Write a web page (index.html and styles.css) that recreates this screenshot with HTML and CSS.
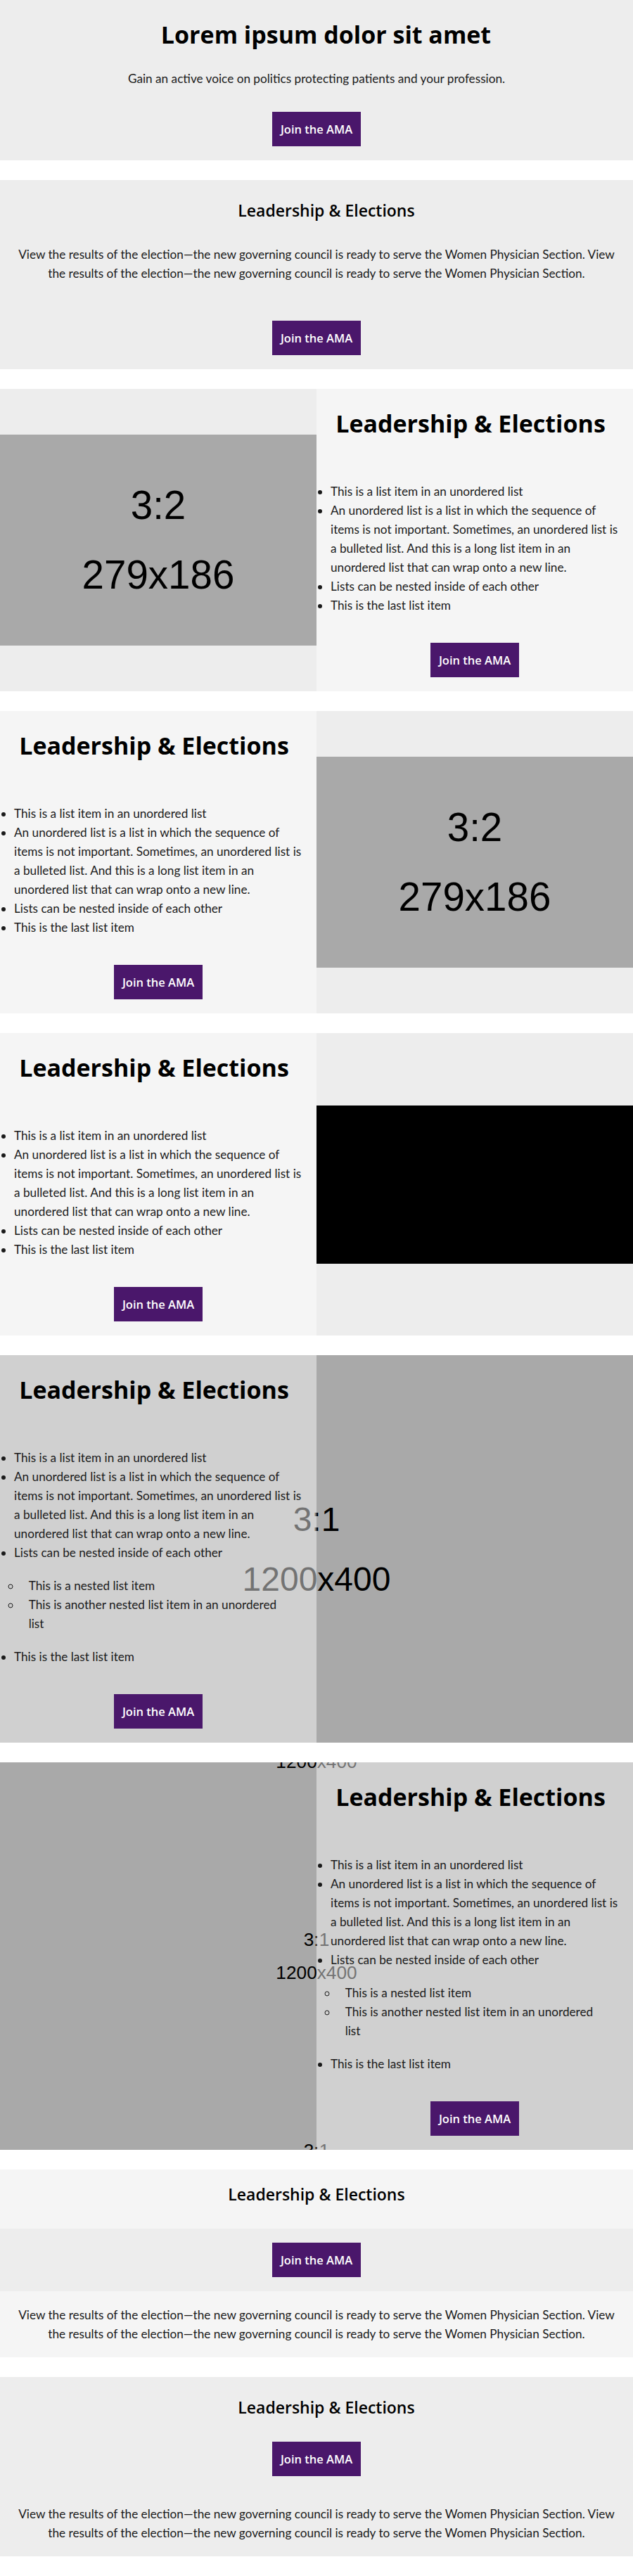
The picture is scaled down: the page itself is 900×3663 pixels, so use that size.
FILE: index.html
```html
<!DOCTYPE html>
<html lang="en">
<head>
<meta charset="utf-8">
<title>Leadership &amp; Elections</title>
<link rel="stylesheet" href="styles.css">
</head>
<body>
<main class="page">

  <section class="hero">
    <h1 class="hero__title">Lorem ipsum dolor sit amet</h1>
    <p class="hero__text">Gain an active voice on politics protecting patients and your profession.</p>
    <div class="actions"><a class="btn" href="#">Join the AMA</a></div>
  </section>

  <section class="block block--text-first">
    <h2 class="block__title">Leadership &amp; Elections</h2>
    <p class="block__text">View the results of the election—the new governing council is ready to serve the Women Physician Section. View the results of the election—the new governing council is ready to serve the Women Physician Section.</p>
    <div class="actions"><a class="btn" href="#">Join the AMA</a></div>
  </section>

  <section class="split">
    <div class="split__media">
      <div class="ph ph--photo"><span>3:2</span><span>279x186</span></div>
    </div>
    <div class="split__body">
      <h2 class="split__title">Leadership &amp; Elections</h2>
      <ul class="list">
        <li>This is a list item in an unordered list</li>
        <li>An unordered list is a list in which the sequence of items is not important. Sometimes, an unordered list is a bulleted list. And this is a long list item in an unordered list that can wrap onto a new line.</li>
        <li>Lists can be nested inside of each other</li>
        <li>This is the last list item</li>
      </ul>
      <div class="actions"><a class="btn" href="#">Join the AMA</a></div>
    </div>
  </section>

  <section class="split">
    <div class="split__body">
      <h2 class="split__title">Leadership &amp; Elections</h2>
      <ul class="list">
        <li>This is a list item in an unordered list</li>
        <li>An unordered list is a list in which the sequence of items is not important. Sometimes, an unordered list is a bulleted list. And this is a long list item in an unordered list that can wrap onto a new line.</li>
        <li>Lists can be nested inside of each other</li>
        <li>This is the last list item</li>
      </ul>
      <div class="actions"><a class="btn" href="#">Join the AMA</a></div>
    </div>
    <div class="split__media">
      <div class="ph ph--photo"><span>3:2</span><span>279x186</span></div>
    </div>
  </section>

  <section class="split">
    <div class="split__body">
      <h2 class="split__title">Leadership &amp; Elections</h2>
      <ul class="list">
        <li>This is a list item in an unordered list</li>
        <li>An unordered list is a list in which the sequence of items is not important. Sometimes, an unordered list is a bulleted list. And this is a long list item in an unordered list that can wrap onto a new line.</li>
        <li>Lists can be nested inside of each other</li>
        <li>This is the last list item</li>
      </ul>
      <div class="actions"><a class="btn" href="#">Join the AMA</a></div>
    </div>
    <div class="split__media">
      <div class="video"></div>
    </div>
  </section>

  <section class="split split--overlay">
    <div class="split__bg split__bg--cover" aria-hidden="true">
      <div class="ph-text ph-text--cover"><span>3:1</span><span>1200x400</span></div>
    </div>
    <div class="split__body split__body--veil">
      <h2 class="split__title">Leadership &amp; Elections</h2>
      <ul class="list">
        <li>This is a list item in an unordered list</li>
        <li>An unordered list is a list in which the sequence of items is not important. Sometimes, an unordered list is a bulleted list. And this is a long list item in an unordered list that can wrap onto a new line.</li>
        <li>Lists can be nested inside of each other
          <ul>
            <li>This is a nested list item</li>
            <li>This is another nested list item in an unordered list</li>
          </ul>
        </li>
        <li>This is the last list item</li>
      </ul>
      <div class="actions"><a class="btn" href="#">Join the AMA</a></div>
    </div>
    <div class="split__media split__media--clear"></div>
  </section>

  <section class="split split--overlay">
    <div class="split__bg split__bg--tiles" aria-hidden="true">
      <div class="ph-tile"><span>3:1</span><span>1200x400</span></div>
      <div class="ph-tile"><span>3:1</span><span>1200x400</span></div>
      <div class="ph-tile"><span>3:1</span><span>1200x400</span></div>
    </div>
    <div class="split__media split__media--clear"></div>
    <div class="split__body split__body--veil">
      <h2 class="split__title">Leadership &amp; Elections</h2>
      <ul class="list">
        <li>This is a list item in an unordered list</li>
        <li>An unordered list is a list in which the sequence of items is not important. Sometimes, an unordered list is a bulleted list. And this is a long list item in an unordered list that can wrap onto a new line.</li>
        <li>Lists can be nested inside of each other
          <ul>
            <li>This is a nested list item</li>
            <li>This is another nested list item in an unordered list</li>
          </ul>
        </li>
        <li>This is the last list item</li>
      </ul>
      <div class="actions"><a class="btn" href="#">Join the AMA</a></div>
    </div>
  </section>

  <section class="stack">
    <div class="stack__band stack__band--head">
      <h2 class="stack__title">Leadership &amp; Elections</h2>
    </div>
    <div class="stack__band stack__band--cta">
      <div class="actions"><a class="btn" href="#">Join the AMA</a></div>
    </div>
    <div class="stack__band stack__band--copy">
      <p class="block__text">View the results of the election—the new governing council is ready to serve the Women Physician Section. View the results of the election—the new governing council is ready to serve the Women Physician Section.</p>
    </div>
  </section>

  <section class="block block--cta-first">
    <h2 class="block__title">Leadership &amp; Elections</h2>
    <div class="actions"><a class="btn" href="#">Join the AMA</a></div>
    <p class="block__text">View the results of the election—the new governing council is ready to serve the Women Physician Section. View the results of the election—the new governing council is ready to serve the Women Physician Section.</p>
  </section>

</main>
</body>
</html>
```

FILE: styles.css
```css
* {
  box-sizing: border-box;
}

html,
body {
  margin: 0;
  padding: 0;
  background: #ffffff;
}

body {
  font-family: Lato, "Open Sans", "Liberation Sans", sans-serif;
  font-size: 17.2px;
  line-height: 27px;
  color: #1a1a1a;
}

.page {
  display: flex;
  flex-direction: column;
  gap: 28px;
  padding-bottom: 28px;
}

/* ---------- shared ---------- */

.actions {
  display: flex;
  justify-content: center;
}

.btn {
  display: block;
  height: 49px;
  padding: 0 12px;
  background: #4a176b;
  color: #ffffff;
  font-family: "Open Sans", Lato, sans-serif;
  font-weight: 600;
  font-size: 16.5px;
  line-height: 49px;
  text-decoration: none;
  white-space: nowrap;
}

/* ---------- hero ---------- */

.hero {
  background: #ededed;
  text-align: center;
  padding: 29px 24px 20px;
}

.hero__title {
  margin: 0;
  padding-left: 27px;
  font-family: "Open Sans", Lato, sans-serif;
  font-weight: 700;
  font-size: 34px;
  line-height: 40px;
  color: #000000;
}

.hero__text {
  margin: 29px 0 34px;
}

/* ---------- centered blocks ---------- */

.block {
  background: #ededed;
  text-align: center;
  padding: 27px 24px 20px;
}

.block__title,
.stack__title {
  margin: 0;
  font-family: "Open Sans", Lato, sans-serif;
  font-weight: 600;
  font-size: 23px;
  line-height: 32px;
  color: #000000;
}

.block__title {
  padding-left: 28px;
}

.block__text {
  margin: 0;
}

.block--text-first .block__text {
  margin-top: 33px;
}

.block--text-first .actions {
  margin-top: 54px;
}

.block--cta-first .actions {
  margin-top: 33px;
}

.block--cta-first .block__text {
  margin-top: 40px;
}

/* ---------- stacked bands ---------- */

.stack {
  display: flex;
  flex-direction: column;
  text-align: center;
}

.stack__band {
  padding: 20px 24px;
}

.stack__band--head {
  background: #f5f5f5;
  padding: 19px 24px 33px;
}

.stack__band--cta {
  background: #ededed;
}

.stack__band--copy {
  background: #f5f5f5;
}

/* ---------- split sections ---------- */

.split {
  display: grid;
  grid-template-columns: 1fr 1fr;
}

.split__media {
  display: flex;
  align-items: center;
  background: #ededed;
}

.split__body {
  background: #f5f5f5;
  padding: 29px 0 20px;
}

.split__title {
  margin: 0;
  padding-right: 12px;
  text-align: center;
  font-family: "Open Sans", Lato, sans-serif;
  font-weight: 700;
  font-size: 34px;
  line-height: 40px;
  color: #000000;
}

.list {
  margin: 63px 0 0;
  padding: 0 20px;
  text-align: left;
}

.list ul {
  margin: 20px 0;
  padding: 0 24px 0 10px;
  list-style-type: circle;
}

.list ul > li {
  padding-left: 10.7px;
}

.split .actions {
  margin-top: 40px;
}

/* placeholder pictures */

.ph {
  width: 100%;
  height: 300px;
  background: #a9a9a9;
  display: flex;
  flex-direction: column;
  justify-content: center;
  align-items: center;
  font-family: "Liberation Sans", Arial, sans-serif;
  color: #000000;
}

.ph--photo {
  font-size: 56.5px;
  line-height: 99px;
}

.video {
  width: 100%;
  height: 225px;
  background: #000000;
}

/* overlay sections: picture fills the section, text column is veiled */

.split--overlay {
  position: relative;
  background: #a9a9a9;
}

.split__bg {
  position: absolute;
  inset: 0;
  overflow: hidden;
  display: flex;
  flex-direction: column;
  justify-content: center;
  align-items: center;
  background: #a9a9a9;
  font-family: "Liberation Sans", Arial, sans-serif;
  color: #000000;
}

.ph-text,
.ph-tile {
  display: flex;
  flex-direction: column;
  align-items: center;
  justify-content: center;
}

.ph-text--cover {
  font-size: 48px;
  line-height: 85px;
}

.ph-tile {
  flex: none;
  width: 100%;
  height: 300px;
  font-size: 26.25px;
  line-height: 46.5px;
}

.split--overlay .split__body,
.split--overlay .split__media {
  position: relative;
}

.split__media--clear {
  background: transparent;
}

.split__body--veil {
  background: rgba(255, 255, 255, 0.45);
}
```
